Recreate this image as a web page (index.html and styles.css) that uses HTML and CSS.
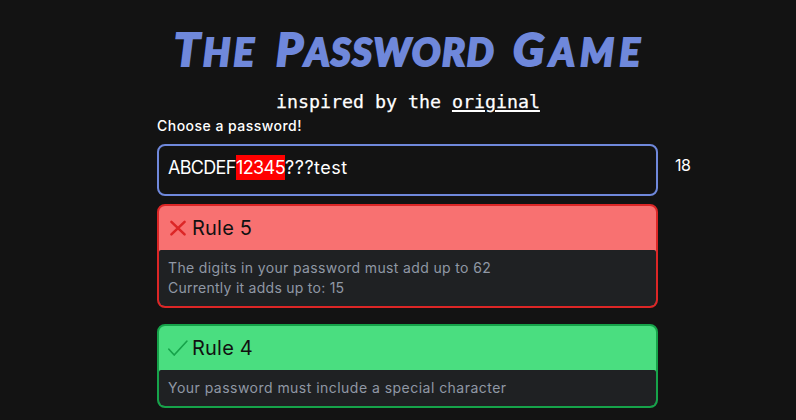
FILE: index.html
```html
<!DOCTYPE html>
<html lang="en">
<head>
<meta charset="utf-8">
<title>The Password Game</title>
<link rel="stylesheet" href="styles.css">
</head>
<body>
<main class="game">
  <h1 class="title"><span class="word word-the">The</span> <span class="word word-password">Password</span> <span class="word word-game">Game</span></h1>
  <p class="credit">inspired by the <a class="link">original</a></p>
  <div class="label">Choose a password!</div>
  <div class="field">
    <div class="input"><span class="before">ABCDEF</span><mark class="digits">12345</mark><span class="after">???test</span></div>
    <span class="count">18</span>
  </div>
  <section class="rule rule-bad">
    <header class="rule-head">
      <svg class="icon" viewBox="0 0 20 20"><path d="M3.4 3.8 16.6 16.4M16.6 3.8 3.4 16.4" stroke-width="2.5"/></svg>
      <span class="rule-name">Rule 5</span>
    </header>
    <div class="rule-body"><div class="line-sum">The digits in your password must add up to 62</div><div class="line-current">Currently it adds up to: 15</div></div>
  </section>
  <section class="rule rule-good">
    <header class="rule-head">
      <svg class="icon" viewBox="0 0 20 20"><path d="M.9 11.2 6.2 17 18.8 3.2" stroke-width="1.7"/></svg>
      <span class="rule-name">Rule 4</span>
    </header>
    <div class="rule-body"><div class="line-special">Your password must include a special character</div></div>
  </section>
</main>
</body>
</html>
```
FILE: styles.css
```css
* { box-sizing: border-box; }
body {
  margin: 0;
  background: #131313;
  color: #fff;
  font-family: Inter, "Open Sans", sans-serif;
}
.game { width: 501px; margin-left: 157px; padding-top: 24px; }
.title {
  display: flex;
  gap: 18px;
  height: 56px;
  margin: 0 0 0 17px;
  color: #6f88db;
  font: italic 900 38px/50px Lato, sans-serif;
  text-transform: uppercase;
  white-space: nowrap;
  -webkit-text-stroke: 2px #6f88db;
  stroke-linejoin: round;
}
.word { display: block; }
.word::first-letter { font-size: 46px; line-height: 50px; }
.word-the { width: 84px; letter-spacing: 3.2px; }
.word-password { width: 219px; letter-spacing: 1.6px; }
.word-game { letter-spacing: 5.6px; }
.credit {
  height: 36px;
  margin: 0;
  padding-left: 119px;
  font: 18.27px/44px "DejaVu Sans Mono", monospace;
  -webkit-text-stroke: .25px #fff;
  white-space: nowrap;
}
.link { text-decoration: underline; text-decoration-thickness: 2px; text-underline-offset: 2px; }
.label { height: 28px; font-size: 14px; font-weight: 500; line-height: 20px; letter-spacing: .47px; }
.field { display: flex; gap: 17px; height: 52px; }
.input {
  width: 501px;
  flex: none;
  padding: 9px;
  border: 2px solid #6f88db;
  border-radius: 8px;
  font-size: 18px;
  line-height: 25px;
  white-space: nowrap;
  display: flex;
}
.before { width: 68px; letter-spacing: -.7px; }
.digits { width: 49px; height: 25px; color: #fff; background: #f00; letter-spacing: -.6px; }
.after { letter-spacing: .5px; }
.count { font-size: 16px; line-height: 43px; letter-spacing: -.5px; }
.rule { margin-top: 8px; border: 2px solid; border-radius: 8px; overflow: hidden; }
.rule + .rule { margin-top: 16px; }
.rule-bad { height: 104px; border-color: #dc2626; background: #f87171; }
.rule-good { height: 84px; border-color: #16a34a; background: #4ade80; }
.rule-head { display: flex; align-items: center; gap: 4px; height: 44px; padding-left: 9px; color: #111; font-size: 20px; letter-spacing: .2px; }
.icon { width: 20px; height: 20px; fill: none; stroke: currentColor; stroke-linecap: round; stroke-linejoin: round; }
.rule-bad .icon { color: #dc2626; }
.rule-good .icon { color: #16a34a; }
.rule-body { height: 100%; padding: 8px 9px; background: #1f2123; color: #9098a5; font-size: 14px; line-height: 20px; border-radius: 2px 2px 0 0; }
.line-sum { letter-spacing: .36px; }
.line-current { letter-spacing: .26px; }
.line-special { letter-spacing: .47px; }
```
